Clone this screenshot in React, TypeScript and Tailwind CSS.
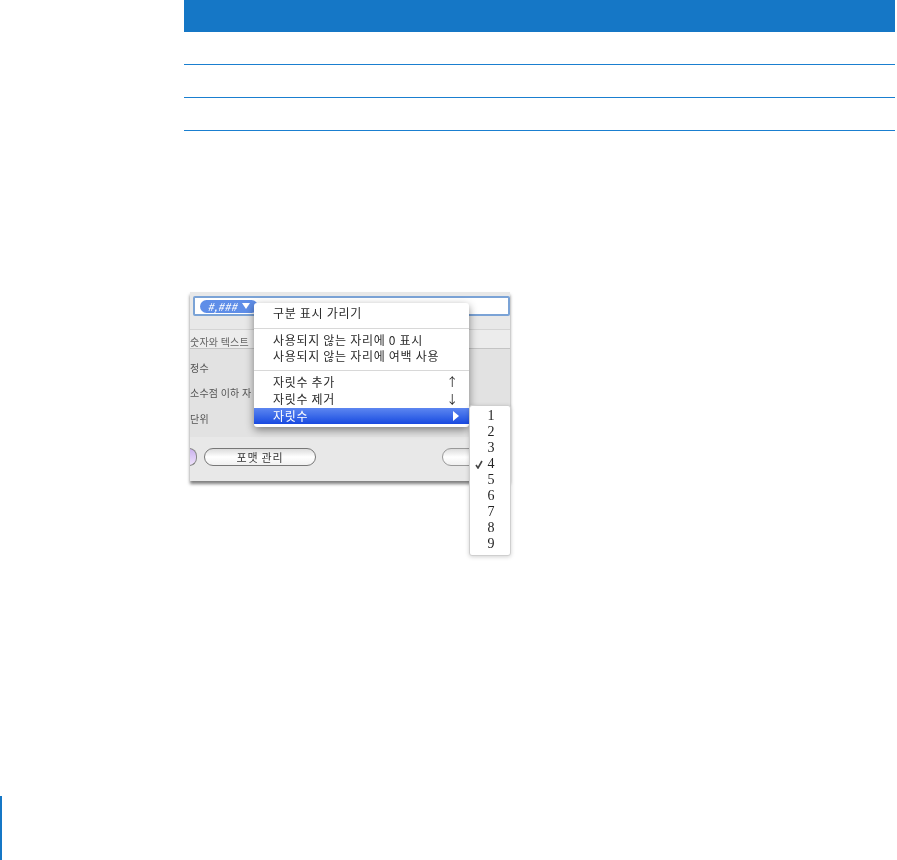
const sans = "font-['Noto_Sans_CJK_KR','Noto_Sans',sans-serif]";

function FormRow({ label, className }: { label: string; className: string }) {
  return <div className={`text-[10px] leading-[14px] tracking-[0.2px] text-[#555] blur-[0.3px] ${className}`}>{label}</div>;
}

function DigitsMenu() {
  const digits = [1, 2, 3, 4, 5, 6, 7, 8, 9];
  return (
    <div className="absolute left-[279px] top-[113px] w-[42px] h-[151px] flex flex-col pt-[2px] bg-white rounded-[3px] border border-[#cfcfcf] shadow-[0_1px_4px_rgba(0,0,0,0.18)] font-['Liberation_Serif',serif]">
      {digits.map((d) => (
        <div key={d} className="relative h-[16px] pl-[2px] text-center text-[14px] leading-[16px] text-[#222] blur-[0.3px]">
          {d === 4 && (
            <svg className="absolute left-[5px] top-[4px]" width="8" height="9" viewBox="0 0 8 9" fill="none">
              <path d="M1 5l2 3 4-7" stroke="#444" strokeWidth="1.6" />
            </svg>
          )}
          {d}
        </div>
      ))}
    </div>
  );
}

function MainMenu() {
  return (
    <div className={`absolute left-[64px] top-[11px] w-[215px] h-[124px] pt-[1px] bg-white rounded-[3px] shadow-[0_3px_8px_rgba(0,0,0,0.45)] text-[12px] tracking-[0.7px] text-[#2a2a2a] blur-[0.3px] ${sans}`}>
      <div className="h-[17px] pl-[19px] leading-[17px]">구분 표시 가리기</div>
      <div className="h-px mt-[7px] mb-[3px] bg-[#d8d8d8]" />
      <div className="h-[16px] pl-[19px] leading-[16px]">사용되지 않는 자리에 0 표시</div>
      <div className="h-[16px] pl-[19px] leading-[16px]">사용되지 않는 자리에 여백 사용</div>
      <div className="h-px mt-[6px] mb-[2px] bg-[#d8d8d8]" />
      <div className="flex justify-between h-[17px] pl-[19px] pr-[10px] leading-[17px]"><span>자릿수 추가</span><span>↑</span></div>
      <div className="flex justify-between h-[17px] pl-[19px] pr-[10px] leading-[17px]"><span>자릿수 제거</span><span>↓</span></div>
      <div className="flex items-center justify-between mt-px h-[16px] pl-[19px] pr-[10px] leading-[16px] text-white bg-gradient-to-b from-[#5d86f0] to-[#1848e0]">
        <span>자릿수</span>
        <span className="w-0 h-0 border-y-[5px] border-y-transparent border-l-[6px] border-l-white" />
      </div>
    </div>
  );
}

function Dialog() {
  return (
    <div className={`relative ml-[190px] mt-[161px] w-[321px] h-[264px] ${sans}`}>
      <div className="w-[320px] h-[189px] flex flex-col overflow-hidden bg-[#e8e8e8] shadow-[0_3px_3px_0_rgba(0,0,0,0.5)]">
        <div className="h-[38px] pt-[4px] pl-[3px] border-b border-[#d4d4d4]">
          <div className="h-[20px] flex items-center pl-[5px] bg-white border-2 border-[#7ba3d6] rounded-[2px]">
            <div className="w-[58px] h-[13px] flex items-center justify-center gap-[5px] rounded-full bg-[#5f8ee8] text-[11px] tracking-[0.5px] italic text-white blur-[0.3px]">
              #,###
              <span className="w-0 h-0 border-x-[4px] border-x-transparent border-t-[6px] border-t-white" />
            </div>
          </div>
        </div>
        <div className="h-[19px] pt-[5px] text-[10px] leading-[14px] tracking-[0.2px] text-[#666] bg-[#ececec] border-b border-[#c4c4c4] blur-[0.3px]">숫자와 텍스트</div>
        <div className="h-[88px] flex flex-col bg-[#e2e2e2]">
          <FormRow label="정수" className="mt-[12px]" />
          <FormRow label="소수점 이하 자" className="mt-[11px]" />
          <FormRow label="단위" className="mt-[12px]" />
        </div>
        <div className="h-[44px] flex items-start pt-[11px]">
          <div className="w-[8px] h-[18px] -ml-[1px] rounded-r-full border border-[#888] bg-gradient-to-b from-[#cbb2ee] to-[#eee2fb]" />
          <div className="ml-[7px] w-[112px] h-[18px] flex items-center justify-center rounded-full border border-[#777] bg-gradient-to-b from-[#dcdcdc] via-white to-[#f0f0f0] text-[11px] tracking-[0.8px] text-[#333] blur-[0.3px]">포맷 관리</div>
          <div className="ml-[126px] w-[40px] h-[18px] rounded-l-full border border-[#999] bg-gradient-to-b from-[#dcdcdc] via-white to-[#f0f0f0]" />
        </div>
      </div>
      <MainMenu />
      <DigitsMenu />
    </div>
  );
}

export default function App() {
  return (
    <div className="relative w-[897px] h-[860px] flex flex-col bg-white overflow-hidden">
      <div className="ml-[184px] w-[711px]">
        <div className="h-[32px] bg-[#1577c6]" />
        <div className="h-[33px] border-b border-[#1a7fd0]" />
        <div className="h-[33px] border-b border-[#1a7fd0]" />
        <div className="h-[33px] border-b border-[#1a7fd0]" />
      </div>
      <Dialog />
      <div className="mt-auto w-[2px] h-[64px] bg-[#1577c6]" />
    </div>
  );
}
